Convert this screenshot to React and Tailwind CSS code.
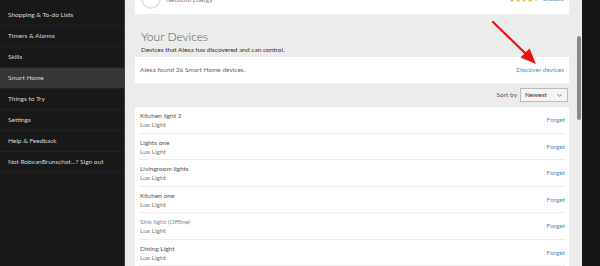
import { ChevronDown } from 'lucide-react';

const menu = [
  'Shopping & To-do Lists',
  'Timers & Alarms',
  'Skills',
  'Smart Home',
  'Things to Try',
  'Settings',
  'Help & Feedback',
  'Not RobvanBrunschot...? Sign out',
];

const devices = [
  { name: 'Kitchen light 2', type: 'Lux Light' },
  { name: 'Lights one', type: 'Lux Light' },
  { name: 'Livingroom lights', type: 'Lux Light' },
  { name: 'Kitchen one', type: 'Lux Light' },
  { name: 'Sink light (Offline)', type: 'Lux Light', offline: true },
  { name: 'Dining Light', type: 'Lux Light' },
];

const Sidebar = () => (
  <aside className="w-[125px] shrink-0 bg-[#181818] border-r border-[#3a3a3a] pt-[5px]">
    {menu.map((item) => (
      <div
        key={item}
        className={`h-[21px] flex items-center pl-[8px] border-b border-[#222] text-[6.5px] text-[#d8d8d8] whitespace-nowrap ${
          item === 'Smart Home' ? 'bg-[#363636]' : ''
        }`}
      >
        {item}
      </div>
    ))}
  </aside>
);

const Arrow = () => (
  <svg className="absolute left-0 top-0 pointer-events-none" width="600" height="266">
    <line x1="493" y1="22" x2="526" y2="54" stroke="#ee1111" strokeWidth="2.2" strokeLinecap="round" />
    <polygon points="536,64 520.5,57.5 529.5,48.5" fill="#ee1111" />
  </svg>
);

export default function App() {
  return (
    <div className="relative flex h-[266px] w-[600px] overflow-hidden font-['Lato',sans-serif]">
      <Sidebar />

      <main className="w-[452px] shrink-0 bg-[#ececec] pl-[10px] pr-[8px]">
        {/* clipped card at the top */}
        <div className="h-[14px] bg-white flex items-end justify-between pl-[6px] pr-[4px] overflow-hidden">
          <div className="flex items-end gap-[5px]">
            <div className="w-[20px] h-[20px] rounded-full border-[2px] border-[#e4e4e4] mb-[5px]" />
            <span className="text-[6.5px] leading-[8px] text-[#777] mb-[10px]">Netatmo Energy</span>
          </div>
          <div className="flex items-end gap-[4px] mb-[11px] pr-[1px]">
            <span className="text-[7px] leading-[8px] text-[#f2a33a]">★★★★<span className="text-[#ddd]">★</span></span>
            <span className="text-[6.5px] leading-[8px] text-[#4a90c4]">Disable</span>
          </div>
        </div>

        <h2 className="mt-[16px] pl-[6px] text-[12px] leading-[14px] text-[#555] font-light">Your Devices</h2>
        <p className="mt-[1px] pl-[6px] text-[6.5px] leading-[9px] text-[#333]">
          Devices that Alexa has discovered and can control.
        </p>

        <div className="mt-[3px] h-[26px] bg-white flex items-center justify-between px-[5px]">
          <span className="text-[6.5px] text-[#666]">Alexa found 26 Smart Home devices.</span>
          <span className="text-[6.5px] text-[#4a90c4]">Discover devices</span>
        </div>

        <div className="h-[24px] flex items-center justify-end gap-[3px] pr-[1px]">
          <span className="text-[6.5px] text-[#555]">Sort by</span>
          <div className="w-[48px] h-[14px] border border-[#bbb] bg-[#f4f4f4] flex items-center justify-between px-[4px]">
            <span className="text-[6.5px] text-[#333]">Newest</span>
            <ChevronDown size={7} strokeWidth={2.5} color="#555" />
          </div>
        </div>

        <div className="bg-white px-[4px]">
          {devices.map((d) => (
            <div key={d.name} className="h-[26.5px] border-b border-[#ececec] flex items-center justify-between pl-[1px] pt-[1px]">
              <div className="flex flex-col">
                <span className={`text-[6.5px] leading-[9px] ${d.offline ? 'text-[#8a8a8a]' : 'text-[#555]'}`}>{d.name}</span>
                <span className="text-[6.5px] leading-[9px] text-[#777]">{d.type}</span>
              </div>
              <span className="text-[6.5px] text-[#4a90c4]">Forget</span>
            </div>
          ))}
        </div>
      </main>

      <div className="w-[5px] shrink-0 bg-[#ececec] pt-[36px]">
        <div className="h-[84px] w-[4px] rounded-[2px] bg-[#8a8a8a]" />
      </div>

      <div className="flex-1 bg-[#161616]" />

      <Arrow />
    </div>
  );
}
